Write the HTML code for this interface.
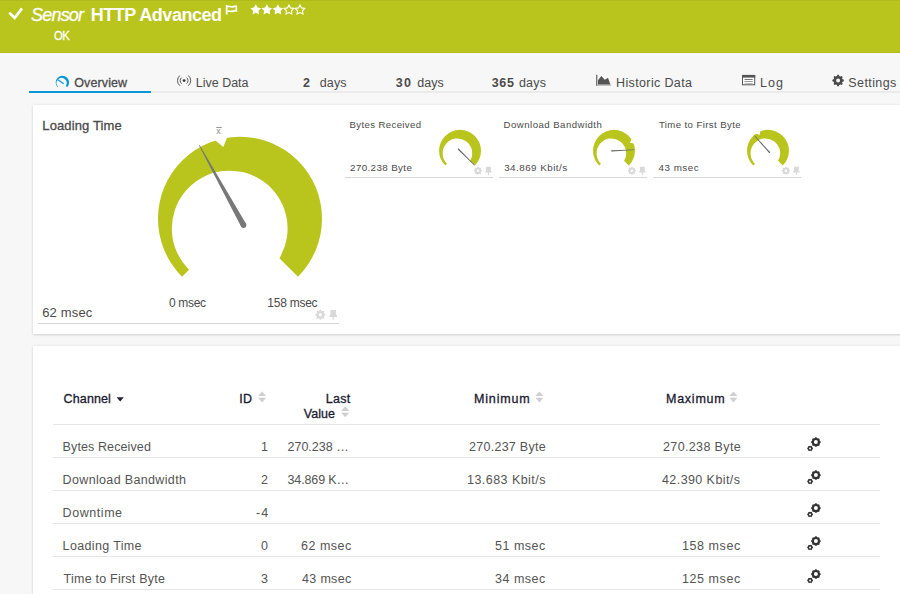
<!DOCTYPE html>
<html><head><meta charset="utf-8"><title>Sensor HTTP Advanced</title>
<style>
*{margin:0;padding:0;box-sizing:border-box}
html,body{width:900px;height:594px;overflow:hidden;background:#f7f7f7;font-family:"Liberation Sans",sans-serif}
.t{position:absolute;white-space:nowrap;font-family:"Liberation Sans",sans-serif}
#hdr{position:absolute;left:0;top:0;width:900px;height:53px;background:#b9c41c;border-bottom:1px solid #b1bb1a}
.panel{position:absolute;background:#fff;box-shadow:0 1px 2px rgba(0,0,0,.13),0 0 3px rgba(0,0,0,.07)}
svg{position:absolute;left:0;top:0}
</style></head><body>
<div id="hdr"></div>
<div class="panel" style="left:33px;top:105px;width:900px;height:229px"></div>
<div class="panel" style="left:33px;top:346px;width:900px;height:300px"></div>
<svg width="900" height="594" viewBox="0 0 900 594">
<polyline points="9.2,12.6 14.7,17.9 22,8.4" fill="none" stroke="#fff" stroke-width="2.7"/>
<path d="M226.7,5 V14.6" stroke="#fff" stroke-width="1.9" fill="none"/>
<path d="M227.5,6.8 C229.5,5.6 231.5,7.6 233.5,6.6 C234.5,6.1 235.5,6.1 236.3,6.4 V10.8 C235.3,10.5 234.3,10.6 233.3,11.1 C231.3,12.1 229.5,10.5 227.5,11.3" stroke="#fff" stroke-width="1.75" fill="none"/>
<polygon points="255.80,4.30 257.50,7.55 261.13,8.17 258.56,10.80 259.09,14.43 255.80,12.80 252.51,14.43 253.04,10.80 250.47,8.17 254.10,7.55" fill="#fff"/>
<polygon points="266.85,4.30 268.55,7.55 272.18,8.17 269.61,10.80 270.14,14.43 266.85,12.80 263.56,14.43 264.09,10.80 261.52,8.17 265.15,7.55" fill="#fff"/>
<polygon points="277.90,4.30 279.60,7.55 283.23,8.17 280.66,10.80 281.19,14.43 277.90,12.80 274.61,14.43 275.14,10.80 272.57,8.17 276.20,7.55" fill="#fff"/>
<polygon points="288.95,5.00 290.48,7.90 293.71,8.45 291.42,10.80 291.89,14.05 288.95,12.60 286.01,14.05 286.48,10.80 284.19,8.45 287.42,7.90" fill="none" stroke="#fff" stroke-width="1.1" stroke-linejoin="miter"/>
<polygon points="300.00,5.00 301.53,7.90 304.76,8.45 302.47,10.80 302.94,14.05 300.00,12.60 297.06,14.05 297.53,10.80 295.24,8.45 298.47,7.90" fill="none" stroke="#fff" stroke-width="1.1" stroke-linejoin="miter"/>
<rect x="151" y="91" width="749" height="2" fill="#ebebeb"/>
<rect x="29" y="91" width="122" height="2" fill="#0896d6"/>
<rect x="0" y="0" width="900" height="1" fill="#b0b91a"/>
<path d="M57.66,87.14 A6.7 6.7 0 1 1 67.14,87.14 L65.81,85.81 A5.0 5.0 0 1 0 58.11,86.69 Z" fill="#0896d6"/>
<line x1="63.7" y1="83.7" x2="57.9" y2="79.7" stroke="#0896d6" stroke-width="1.1"/>
<circle cx="184.1" cy="80.6" r="1.45" fill="#3a3a3a"/>
<path d="M181.59,83.59 A3.9 3.9 0 0 1 181.59,77.61" stroke="#555" stroke-width="1.0" fill="none"/>
<path d="M186.61,83.59 A3.9 3.9 0 0 0 186.61,77.61" stroke="#555" stroke-width="1.0" fill="none"/>
<path d="M179.86,85.66 A6.6 6.6 0 0 1 179.86,75.54" stroke="#555" stroke-width="1.0" fill="none"/>
<path d="M188.34,85.66 A6.6 6.6 0 0 0 188.34,75.54" stroke="#555" stroke-width="1.0" fill="none"/>
<rect x="596.2" y="74.8" width="1.1" height="11" fill="#555"/>
<rect x="597" y="84.6" width="14" height="1.1" fill="#aaa"/>
<polygon points="598,84.4 598,80.2 601.3,76 604.8,79.8 608,77.8 610.4,84.4" fill="#555"/>
<rect x="742.5" y="75.4" width="12.2" height="9.4" fill="#fff" stroke="#555" stroke-width="1"/>
<rect x="742" y="75" width="13.2" height="2.6" fill="#555"/>
<rect x="744.5" y="79" width="8.2" height="1" fill="#777"/>
<rect x="744.5" y="81" width="8.2" height="1" fill="#999"/>
<rect x="744.5" y="83" width="8.2" height="1" fill="#bbb"/>
<path d="M842.56,79.36 L843.85,79.73 L843.85,81.27 L842.56,81.64 L842.06,82.84 L842.71,84.02 L841.62,85.11 L840.44,84.46 L839.24,84.96 L838.87,86.25 L837.33,86.25 L836.96,84.96 L835.76,84.46 L834.58,85.11 L833.49,84.02 L834.14,82.84 L833.64,81.64 L832.35,81.27 L832.35,79.73 L833.64,79.36 L834.14,78.16 L833.49,76.98 L834.58,75.89 L835.76,76.54 L836.96,76.04 L837.33,74.75 L838.87,74.75 L839.24,76.04 L840.44,76.54 L841.62,75.89 L842.71,76.98 L842.06,78.16 Z M840.10,80.5 A2.0 2.0 0 1 0 836.10,80.5 A2.0 2.0 0 1 0 840.10,80.5 Z" fill="#4a4a4a" fill-rule="evenodd"/>
<g transform="translate(240,218.7) scale(1.00000)"><path d="M -57.98,57.98 A 82 82 0 1 1 57.98,57.98 L 39.46,39.46 A 57.9 57.9 0 1 0 -51,51 Z" fill="#b9c41c"/><polygon points="-28.60,-81.40 -16.70,-71.80 -11.00,-85.60 -20.00,-95.00" fill="#fff"/></g>
<polygon points="199.58,145.06 246.03,223.70 241.05,226.47 198.97,145.40" fill="#777"/>
<circle cx="243.54" cy="225.08" r="2.85" fill="#777"/>
<text x="216.2" y="134.3" font-family="Liberation Sans" font-size="9" fill="#8e8e8e">x</text>
<rect x="216.2" y="127" width="5.6" height="0.9" fill="#8e8e8e"/>
<rect x="38" y="323" width="301" height="1" fill="#d6d6d6"/>
<path d="M324.27,313.81 L325.45,314.12 L325.45,315.48 L324.27,315.79 L323.84,316.84 L324.45,317.89 L323.49,318.85 L322.44,318.24 L321.39,318.67 L321.08,319.85 L319.72,319.85 L319.41,318.67 L318.36,318.24 L317.31,318.85 L316.35,317.89 L316.96,316.84 L316.53,315.79 L315.35,315.48 L315.35,314.12 L316.53,313.81 L316.96,312.76 L316.35,311.71 L317.31,310.75 L318.36,311.36 L319.41,310.93 L319.72,309.75 L321.08,309.75 L321.39,310.93 L322.44,311.36 L323.49,310.75 L324.45,311.71 L323.84,312.76 Z M322.10,314.8 A1.7 1.7 0 1 0 318.70,314.8 A1.7 1.7 0 1 0 322.10,314.8 Z" fill="#d9d9d9" fill-rule="evenodd"/>
<path transform="translate(329.1,310.1) scale(1.18)" d="M1.1,0 H5.9 V4.2 H6.6 V5.8 H4.0 V8.2 H3.0 V5.8 H0.4 V4.2 H1.1 Z" fill="#d9d9d9"/>
<g transform="translate(460.05,150.75) scale(0.25549)"><path d="M -57.98,57.98 A 82 82 0 1 1 57.98,57.98 L 39.46,39.46 A 57.9 57.9 0 1 0 -51,51 Z" fill="#b9c41c"/></g>
<polygon points="474.37,165.42 458.00,149.69 458.99,148.70 474.72,165.07" fill="#666"/><circle cx="458.49" cy="149.19" r="0.70" fill="#666"/>
<rect x="345.0" y="177" width="148" height="1" fill="#d6d6d6"/>
<path d="M481.15,169.98 L482.01,170.25 L482.01,171.35 L481.15,171.62 L480.79,172.48 L481.21,173.29 L480.44,174.06 L479.63,173.64 L478.77,174.00 L478.50,174.86 L477.40,174.86 L477.13,174.00 L476.27,173.64 L475.46,174.06 L474.69,173.29 L475.11,172.48 L474.75,171.62 L473.89,171.35 L473.89,170.25 L474.75,169.98 L475.11,169.12 L474.69,168.31 L475.46,167.54 L476.27,167.96 L477.13,167.60 L477.40,166.74 L478.50,166.74 L478.77,167.60 L479.63,167.96 L480.44,167.54 L481.21,168.31 L480.79,169.12 Z M479.25,170.8 A1.3 1.3 0 1 0 476.65,170.8 A1.3 1.3 0 1 0 479.25,170.8 Z" fill="#d9d9d9" fill-rule="evenodd"/>
<path transform="translate(484.95,166.8) scale(1.0)" d="M1.1,0 H5.9 V4.2 H6.6 V5.8 H4.0 V8.2 H3.0 V5.8 H0.4 V4.2 H1.1 Z" fill="#d9d9d9"/>
<g transform="translate(614.0,150.75) scale(0.25549)"><path d="M -57.98,57.98 A 82 82 0 1 1 57.98,57.98 L 39.46,39.46 A 57.9 57.9 0 1 0 -51,51 Z" fill="#b9c41c"/><polygon points="72.04,-51.85 62.20,-31.13 84.33,-27.65 94.88,-44.07" fill="#fff"/></g>
<polygon points="634.48,149.93 611.84,151.56 611.77,150.17 634.46,149.43" fill="#666"/><circle cx="611.80" cy="150.87" r="0.70" fill="#666"/>
<rect x="499.1" y="177" width="148" height="1" fill="#d6d6d6"/>
<path d="M635.10,169.98 L635.96,170.25 L635.96,171.35 L635.10,171.62 L634.74,172.48 L635.16,173.29 L634.39,174.06 L633.58,173.64 L632.72,174.00 L632.45,174.86 L631.35,174.86 L631.08,174.00 L630.22,173.64 L629.41,174.06 L628.64,173.29 L629.06,172.48 L628.70,171.62 L627.84,171.35 L627.84,170.25 L628.70,169.98 L629.06,169.12 L628.64,168.31 L629.41,167.54 L630.22,167.96 L631.08,167.60 L631.35,166.74 L632.45,166.74 L632.72,167.60 L633.58,167.96 L634.39,167.54 L635.16,168.31 L634.74,169.12 Z M633.20,170.8 A1.3 1.3 0 1 0 630.60,170.8 A1.3 1.3 0 1 0 633.20,170.8 Z" fill="#d9d9d9" fill-rule="evenodd"/>
<path transform="translate(638.9,166.8) scale(1.0)" d="M1.1,0 H5.9 V4.2 H6.6 V5.8 H4.0 V8.2 H3.0 V5.8 H0.4 V4.2 H1.1 Z" fill="#d9d9d9"/>
<g transform="translate(768.0,150.75) scale(0.25549)"><path d="M -57.98,57.98 A 82 82 0 1 1 57.98,57.98 L 39.46,39.46 A 57.9 57.9 0 1 0 -51,51 Z" fill="#b9c41c"/><polygon points="-53.35,-70.93 -32.43,-61.54 -29.41,-83.73 -46.05,-93.94" fill="#fff"/></g>
<polygon points="754.47,135.35 769.99,151.92 768.95,152.85 754.10,135.68" fill="#666"/><circle cx="769.47" cy="152.38" r="0.70" fill="#666"/>
<rect x="653.2" y="177" width="148" height="1" fill="#d6d6d6"/>
<path d="M789.10,169.98 L789.96,170.25 L789.96,171.35 L789.10,171.62 L788.74,172.48 L789.16,173.29 L788.39,174.06 L787.58,173.64 L786.72,174.00 L786.45,174.86 L785.35,174.86 L785.08,174.00 L784.22,173.64 L783.41,174.06 L782.64,173.29 L783.06,172.48 L782.70,171.62 L781.84,171.35 L781.84,170.25 L782.70,169.98 L783.06,169.12 L782.64,168.31 L783.41,167.54 L784.22,167.96 L785.08,167.60 L785.35,166.74 L786.45,166.74 L786.72,167.60 L787.58,167.96 L788.39,167.54 L789.16,168.31 L788.74,169.12 Z M787.20,170.8 A1.3 1.3 0 1 0 784.60,170.8 A1.3 1.3 0 1 0 787.20,170.8 Z" fill="#d9d9d9" fill-rule="evenodd"/>
<path transform="translate(792.9,166.8) scale(1.0)" d="M1.1,0 H5.9 V4.2 H6.6 V5.8 H4.0 V8.2 H3.0 V5.8 H0.4 V4.2 H1.1 Z" fill="#d9d9d9"/>
<rect x="53" y="424" width="827" height="1" fill="#e6e6e6"/>
<rect x="53" y="457" width="827" height="1" fill="#e6e6e6"/>
<path d="M819.97,441.06 L820.66,441.46 L820.66,442.74 L819.97,443.14 L819.52,444.24 L819.72,445.01 L818.81,445.92 L818.04,445.72 L816.94,446.17 L816.54,446.86 L815.26,446.86 L814.86,446.17 L813.76,445.72 L812.99,445.92 L812.08,445.01 L812.28,444.24 L811.83,443.14 L811.14,442.74 L811.14,441.46 L811.83,441.06 L812.28,439.96 L812.08,439.19 L812.99,438.28 L813.76,438.48 L814.86,438.03 L815.26,437.34 L816.54,437.34 L816.94,438.03 L818.04,438.48 L818.81,438.28 L819.72,439.19 L819.52,439.96 Z M817.90,442.1 A2.0 2.0 0 1 0 813.90,442.1 A2.0 2.0 0 1 0 817.90,442.1 Z" fill="#333" fill-rule="evenodd"/>
<path d="M812.46,447.58 L812.95,447.89 L812.95,448.91 L812.46,449.22 L811.99,450.03 L811.97,450.62 L811.08,451.13 L810.57,450.86 L809.63,450.86 L809.12,451.13 L808.23,450.62 L808.21,450.03 L807.74,449.22 L807.25,448.91 L807.25,447.89 L807.74,447.58 L808.21,446.77 L808.23,446.18 L809.12,445.67 L809.63,445.94 L810.57,445.94 L811.08,445.67 L811.97,446.18 L811.99,446.77 Z M811.10,448.40000000000003 A1.0 1.0 0 1 0 809.10,448.40000000000003 A1.0 1.0 0 1 0 811.10,448.40000000000003 Z" fill="#333" fill-rule="evenodd"/>
<rect x="53" y="490" width="827" height="1" fill="#e6e6e6"/>
<path d="M819.97,474.06 L820.66,474.46 L820.66,475.74 L819.97,476.14 L819.52,477.24 L819.72,478.01 L818.81,478.92 L818.04,478.72 L816.94,479.17 L816.54,479.86 L815.26,479.86 L814.86,479.17 L813.76,478.72 L812.99,478.92 L812.08,478.01 L812.28,477.24 L811.83,476.14 L811.14,475.74 L811.14,474.46 L811.83,474.06 L812.28,472.96 L812.08,472.19 L812.99,471.28 L813.76,471.48 L814.86,471.03 L815.26,470.34 L816.54,470.34 L816.94,471.03 L818.04,471.48 L818.81,471.28 L819.72,472.19 L819.52,472.96 Z M817.90,475.1 A2.0 2.0 0 1 0 813.90,475.1 A2.0 2.0 0 1 0 817.90,475.1 Z" fill="#333" fill-rule="evenodd"/>
<path d="M812.46,480.58 L812.95,480.89 L812.95,481.91 L812.46,482.22 L811.99,483.03 L811.97,483.62 L811.08,484.13 L810.57,483.86 L809.63,483.86 L809.12,484.13 L808.23,483.62 L808.21,483.03 L807.74,482.22 L807.25,481.91 L807.25,480.89 L807.74,480.58 L808.21,479.77 L808.23,479.18 L809.12,478.67 L809.63,478.94 L810.57,478.94 L811.08,478.67 L811.97,479.18 L811.99,479.77 Z M811.10,481.40000000000003 A1.0 1.0 0 1 0 809.10,481.40000000000003 A1.0 1.0 0 1 0 811.10,481.40000000000003 Z" fill="#333" fill-rule="evenodd"/>
<rect x="53" y="523" width="827" height="1" fill="#e6e6e6"/>
<path d="M819.97,507.06 L820.66,507.46 L820.66,508.74 L819.97,509.14 L819.52,510.24 L819.72,511.01 L818.81,511.92 L818.04,511.72 L816.94,512.17 L816.54,512.86 L815.26,512.86 L814.86,512.17 L813.76,511.72 L812.99,511.92 L812.08,511.01 L812.28,510.24 L811.83,509.14 L811.14,508.74 L811.14,507.46 L811.83,507.06 L812.28,505.96 L812.08,505.19 L812.99,504.28 L813.76,504.48 L814.86,504.03 L815.26,503.34 L816.54,503.34 L816.94,504.03 L818.04,504.48 L818.81,504.28 L819.72,505.19 L819.52,505.96 Z M817.90,508.1 A2.0 2.0 0 1 0 813.90,508.1 A2.0 2.0 0 1 0 817.90,508.1 Z" fill="#333" fill-rule="evenodd"/>
<path d="M812.46,513.58 L812.95,513.89 L812.95,514.91 L812.46,515.22 L811.99,516.03 L811.97,516.62 L811.08,517.13 L810.57,516.86 L809.63,516.86 L809.12,517.13 L808.23,516.62 L808.21,516.03 L807.74,515.22 L807.25,514.91 L807.25,513.89 L807.74,513.58 L808.21,512.77 L808.23,512.18 L809.12,511.67 L809.63,511.94 L810.57,511.94 L811.08,511.67 L811.97,512.18 L811.99,512.77 Z M811.10,514.4 A1.0 1.0 0 1 0 809.10,514.4 A1.0 1.0 0 1 0 811.10,514.4 Z" fill="#333" fill-rule="evenodd"/>
<rect x="53" y="556" width="827" height="1" fill="#e6e6e6"/>
<path d="M819.97,540.06 L820.66,540.46 L820.66,541.74 L819.97,542.14 L819.52,543.24 L819.72,544.01 L818.81,544.92 L818.04,544.72 L816.94,545.17 L816.54,545.86 L815.26,545.86 L814.86,545.17 L813.76,544.72 L812.99,544.92 L812.08,544.01 L812.28,543.24 L811.83,542.14 L811.14,541.74 L811.14,540.46 L811.83,540.06 L812.28,538.96 L812.08,538.19 L812.99,537.28 L813.76,537.48 L814.86,537.03 L815.26,536.34 L816.54,536.34 L816.94,537.03 L818.04,537.48 L818.81,537.28 L819.72,538.19 L819.52,538.96 Z M817.90,541.1 A2.0 2.0 0 1 0 813.90,541.1 A2.0 2.0 0 1 0 817.90,541.1 Z" fill="#333" fill-rule="evenodd"/>
<path d="M812.46,546.58 L812.95,546.89 L812.95,547.91 L812.46,548.22 L811.99,549.03 L811.97,549.62 L811.08,550.13 L810.57,549.86 L809.63,549.86 L809.12,550.13 L808.23,549.62 L808.21,549.03 L807.74,548.22 L807.25,547.91 L807.25,546.89 L807.74,546.58 L808.21,545.77 L808.23,545.18 L809.12,544.67 L809.63,544.94 L810.57,544.94 L811.08,544.67 L811.97,545.18 L811.99,545.77 Z M811.10,547.4 A1.0 1.0 0 1 0 809.10,547.4 A1.0 1.0 0 1 0 811.10,547.4 Z" fill="#333" fill-rule="evenodd"/>
<rect x="53" y="589" width="827" height="1" fill="#e6e6e6"/>
<path d="M819.97,573.06 L820.66,573.46 L820.66,574.74 L819.97,575.14 L819.52,576.24 L819.72,577.01 L818.81,577.92 L818.04,577.72 L816.94,578.17 L816.54,578.86 L815.26,578.86 L814.86,578.17 L813.76,577.72 L812.99,577.92 L812.08,577.01 L812.28,576.24 L811.83,575.14 L811.14,574.74 L811.14,573.46 L811.83,573.06 L812.28,571.96 L812.08,571.19 L812.99,570.28 L813.76,570.48 L814.86,570.03 L815.26,569.34 L816.54,569.34 L816.94,570.03 L818.04,570.48 L818.81,570.28 L819.72,571.19 L819.52,571.96 Z M817.90,574.1 A2.0 2.0 0 1 0 813.90,574.1 A2.0 2.0 0 1 0 817.90,574.1 Z" fill="#333" fill-rule="evenodd"/>
<path d="M812.46,579.58 L812.95,579.89 L812.95,580.91 L812.46,581.22 L811.99,582.03 L811.97,582.62 L811.08,583.13 L810.57,582.86 L809.63,582.86 L809.12,583.13 L808.23,582.62 L808.21,582.03 L807.74,581.22 L807.25,580.91 L807.25,579.89 L807.74,579.58 L808.21,578.77 L808.23,578.18 L809.12,577.67 L809.63,577.94 L810.57,577.94 L811.08,577.67 L811.97,578.18 L811.99,578.77 Z M811.10,580.4 A1.0 1.0 0 1 0 809.10,580.4 A1.0 1.0 0 1 0 811.10,580.4 Z" fill="#333" fill-rule="evenodd"/>
<polygon points="116.6,397.2 123.8,397.2 120.2,401.4" fill="#1f1f3d"/>
<polygon points="258.1,396.0 262.1,391.4 266.1,396.0" fill="#cfcfcf"/><polygon points="258.1,397.79999999999995 266.1,397.79999999999995 262.1,402.4" fill="#cfcfcf"/>
<polygon points="341.2,410.90000000000003 345.2,406.3 349.2,410.90000000000003" fill="#cfcfcf"/><polygon points="341.2,412.7 349.2,412.7 345.2,417.3" fill="#cfcfcf"/>
<polygon points="535.4,396.0 539.4,391.4 543.4,396.0" fill="#cfcfcf"/><polygon points="535.4,397.79999999999995 543.4,397.79999999999995 539.4,402.4" fill="#cfcfcf"/>
<polygon points="729.4,396.0 733.4,391.4 737.4,396.0" fill="#cfcfcf"/><polygon points="729.4,397.79999999999995 737.4,397.79999999999995 733.4,402.4" fill="#cfcfcf"/>
</svg>
<span class="t" style="left:31.1px;top:6px;font-size:18px;line-height:18px;font-weight:normal;font-style:italic;letter-spacing:-0.82px;color:#ffffff;-webkit-text-stroke:0.3px #ffffff">Sensor</span>
<span class="t" style="left:90.7px;top:6px;font-size:18px;line-height:18px;font-weight:bold;font-style:normal;letter-spacing:-0.475px;color:#ffffff">HTTP Advanced</span>
<span class="t" style="left:54.0px;top:30px;font-size:12.5px;line-height:12.5px;font-weight:normal;font-style:normal;letter-spacing:-0.6px;color:#ffffff;transform:scaleX(0.9);transform-origin:0 0;-webkit-text-stroke:0.3px #ffffff">OK</span>
<span class="t" style="left:74.3px;top:77px;font-size:12.5px;line-height:12.5px;font-weight:normal;font-style:normal;letter-spacing:0.1px;color:#4b4b4b;-webkit-text-stroke:0.3px #4b4b4b">Overview</span>
<span class="t" style="left:195.8px;top:77px;font-size:12.5px;line-height:12.5px;font-weight:normal;font-style:normal;letter-spacing:-0.013px;color:#4b4b4b">Live Data</span>
<span class="t" style="left:302.9px;top:77px;font-size:12.5px;line-height:12.5px;font-weight:bold;font-style:normal;letter-spacing:0.0px;color:#4b4b4b">2</span>
<span class="t" style="left:319.8px;top:77px;font-size:12.5px;line-height:12.5px;font-weight:normal;font-style:normal;letter-spacing:0.1px;color:#4b4b4b">days</span>
<span class="t" style="left:395.8px;top:77px;font-size:12.5px;line-height:12.5px;font-weight:bold;font-style:normal;letter-spacing:1.2px;color:#4b4b4b">30</span>
<span class="t" style="left:417.2px;top:77px;font-size:12.5px;line-height:12.5px;font-weight:normal;font-style:normal;letter-spacing:0.033px;color:#4b4b4b">days</span>
<span class="t" style="left:491.8px;top:77px;font-size:12.5px;line-height:12.5px;font-weight:bold;font-style:normal;letter-spacing:0.6px;color:#4b4b4b">365</span>
<span class="t" style="left:518.9px;top:77px;font-size:12.5px;line-height:12.5px;font-weight:normal;font-style:normal;letter-spacing:0.233px;color:#4b4b4b">days</span>
<span class="t" style="left:616.1px;top:77px;font-size:12.5px;line-height:12.5px;font-weight:normal;font-style:normal;letter-spacing:0.358px;color:#4b4b4b">Historic Data</span>
<span class="t" style="left:760.0px;top:77px;font-size:12.5px;line-height:12.5px;font-weight:normal;font-style:normal;letter-spacing:1.05px;color:#4b4b4b">Log</span>
<span class="t" style="left:848.3px;top:77px;font-size:12.5px;line-height:12.5px;font-weight:normal;font-style:normal;letter-spacing:0.4px;color:#4b4b4b">Settings</span>
<span class="t" style="left:42.3px;top:119px;font-size:13px;line-height:13px;font-weight:normal;font-style:normal;letter-spacing:0.127px;color:#4a4a4a;-webkit-text-stroke:0.3px #4a4a4a">Loading Time</span>
<span class="t" style="left:42.2px;top:306px;font-size:13px;line-height:13px;font-weight:normal;font-style:normal;letter-spacing:0.167px;color:#4a4a4a">62 msec</span>
<span class="t" style="left:169.0px;top:297px;font-size:12px;line-height:12px;font-weight:normal;font-style:normal;letter-spacing:-0.34px;color:#4a4a4a">0 msec</span>
<span class="t" style="left:267.3px;top:297px;font-size:12px;line-height:12px;font-weight:normal;font-style:normal;letter-spacing:-0.243px;color:#4a4a4a">158 msec</span>
<span class="t" style="left:349.6px;top:120px;font-size:9.6px;line-height:9.6px;font-weight:normal;font-style:normal;letter-spacing:0.369px;color:#4a4a4a">Bytes Received</span>
<span class="t" style="left:350.1px;top:163px;font-size:9.8px;line-height:9.8px;font-weight:normal;font-style:normal;letter-spacing:0.364px;color:#4a4a4a">270.238 Byte</span>
<span class="t" style="left:503.6px;top:120px;font-size:9.6px;line-height:9.6px;font-weight:normal;font-style:normal;letter-spacing:0.476px;color:#4a4a4a">Download Bandwidth</span>
<span class="t" style="left:504.2px;top:163px;font-size:9.8px;line-height:9.8px;font-weight:normal;font-style:normal;letter-spacing:0.483px;color:#4a4a4a">34.869 Kbit/s</span>
<span class="t" style="left:658.9px;top:120px;font-size:9.6px;line-height:9.6px;font-weight:normal;font-style:normal;letter-spacing:0.406px;color:#4a4a4a">Time to First Byte</span>
<span class="t" style="left:658.5px;top:163px;font-size:9.8px;line-height:9.8px;font-weight:normal;font-style:normal;letter-spacing:0.517px;color:#4a4a4a">43 msec</span>
<span class="t" style="left:63.6px;top:393px;font-size:12.5px;line-height:12.5px;font-weight:normal;font-style:normal;letter-spacing:0.117px;color:#1a1a30;-webkit-text-stroke:0.3px #1a1a30">Channel</span>
<span class="t" style="left:239.3px;top:393px;font-size:12.5px;line-height:12.5px;font-weight:normal;font-style:normal;letter-spacing:0.3px;color:#1a1a30;-webkit-text-stroke:0.3px #1a1a30">ID</span>
<span class="t" style="left:325.7px;top:393px;font-size:12.5px;line-height:12.5px;font-weight:normal;font-style:normal;letter-spacing:0.333px;color:#1a1a30;-webkit-text-stroke:0.3px #1a1a30">Last</span>
<span class="t" style="left:303.7px;top:408px;font-size:12.5px;line-height:12.5px;font-weight:normal;font-style:normal;letter-spacing:0.075px;color:#1a1a30;-webkit-text-stroke:0.3px #1a1a30">Value</span>
<span class="t" style="left:474.0px;top:393px;font-size:12.5px;line-height:12.5px;font-weight:normal;font-style:normal;letter-spacing:0.833px;color:#1a1a30;-webkit-text-stroke:0.3px #1a1a30">Minimum</span>
<span class="t" style="left:666.0px;top:393px;font-size:12.5px;line-height:12.5px;font-weight:normal;font-style:normal;letter-spacing:0.75px;color:#1a1a30;-webkit-text-stroke:0.3px #1a1a30">Maximum</span>
<span class="t" style="left:62.6px;top:441px;font-size:12.5px;line-height:12.5px;font-weight:normal;font-style:normal;letter-spacing:0.108px;color:#545454">Bytes Received</span>
<span class="t" style="left:261.0px;top:441px;font-size:12.5px;line-height:12.5px;font-weight:normal;font-style:normal;letter-spacing:0.0px;color:#545454">1</span>
<span class="t" style="left:287.5px;top:441px;font-size:12.5px;line-height:12.5px;font-weight:normal;font-style:normal;letter-spacing:0.0px;color:#545454">270.238 …</span>
<span class="t" style="left:469.0px;top:441px;font-size:12.5px;line-height:12.5px;font-weight:normal;font-style:normal;letter-spacing:0.273px;color:#545454">270.237 Byte</span>
<span class="t" style="left:663.0px;top:441px;font-size:12.5px;line-height:12.5px;font-weight:normal;font-style:normal;letter-spacing:0.364px;color:#545454">270.238 Byte</span>
<span class="t" style="left:62.6px;top:474px;font-size:12.5px;line-height:12.5px;font-weight:normal;font-style:normal;letter-spacing:0.347px;color:#545454">Download Bandwidth</span>
<span class="t" style="left:261.0px;top:474px;font-size:12.5px;line-height:12.5px;font-weight:normal;font-style:normal;letter-spacing:0.0px;color:#545454">2</span>
<span class="t" style="left:287.5px;top:474px;font-size:12.5px;line-height:12.5px;font-weight:normal;font-style:normal;letter-spacing:-0.125px;color:#545454">34.869 K…</span>
<span class="t" style="left:467.0px;top:474px;font-size:12.5px;line-height:12.5px;font-weight:normal;font-style:normal;letter-spacing:0.458px;color:#545454">13.683 Kbit/s</span>
<span class="t" style="left:662.0px;top:474px;font-size:12.5px;line-height:12.5px;font-weight:normal;font-style:normal;letter-spacing:0.417px;color:#545454">42.390 Kbit/s</span>
<span class="t" style="left:62.6px;top:507px;font-size:12.5px;line-height:12.5px;font-weight:normal;font-style:normal;letter-spacing:0.557px;color:#545454">Downtime</span>
<span class="t" style="left:256.0px;top:507px;font-size:12.5px;line-height:12.5px;font-weight:normal;font-style:normal;letter-spacing:1.0px;color:#545454">-4</span>
<span class="t" style="left:62.6px;top:540px;font-size:12.5px;line-height:12.5px;font-weight:normal;font-style:normal;letter-spacing:0.355px;color:#545454">Loading Time</span>
<span class="t" style="left:261.0px;top:540px;font-size:12.5px;line-height:12.5px;font-weight:normal;font-style:normal;letter-spacing:0.0px;color:#545454">0</span>
<span class="t" style="left:301.0px;top:540px;font-size:12.5px;line-height:12.5px;font-weight:normal;font-style:normal;letter-spacing:0.5px;color:#545454">62 msec</span>
<span class="t" style="left:495.0px;top:540px;font-size:12.5px;line-height:12.5px;font-weight:normal;font-style:normal;letter-spacing:0.5px;color:#545454">51 msec</span>
<span class="t" style="left:682.0px;top:540px;font-size:12.5px;line-height:12.5px;font-weight:normal;font-style:normal;letter-spacing:0.571px;color:#545454">158 msec</span>
<span class="t" style="left:63.6px;top:573px;font-size:12.5px;line-height:12.5px;font-weight:normal;font-style:normal;letter-spacing:0.229px;color:#545454">Time to First Byte</span>
<span class="t" style="left:261.0px;top:573px;font-size:12.5px;line-height:12.5px;font-weight:normal;font-style:normal;letter-spacing:0.0px;color:#545454">3</span>
<span class="t" style="left:302.0px;top:573px;font-size:12.5px;line-height:12.5px;font-weight:normal;font-style:normal;letter-spacing:0.333px;color:#545454">43 msec</span>
<span class="t" style="left:495.0px;top:573px;font-size:12.5px;line-height:12.5px;font-weight:normal;font-style:normal;letter-spacing:0.5px;color:#545454">34 msec</span>
<span class="t" style="left:682.0px;top:573px;font-size:12.5px;line-height:12.5px;font-weight:normal;font-style:normal;letter-spacing:0.571px;color:#545454">125 msec</span>
</body></html>
